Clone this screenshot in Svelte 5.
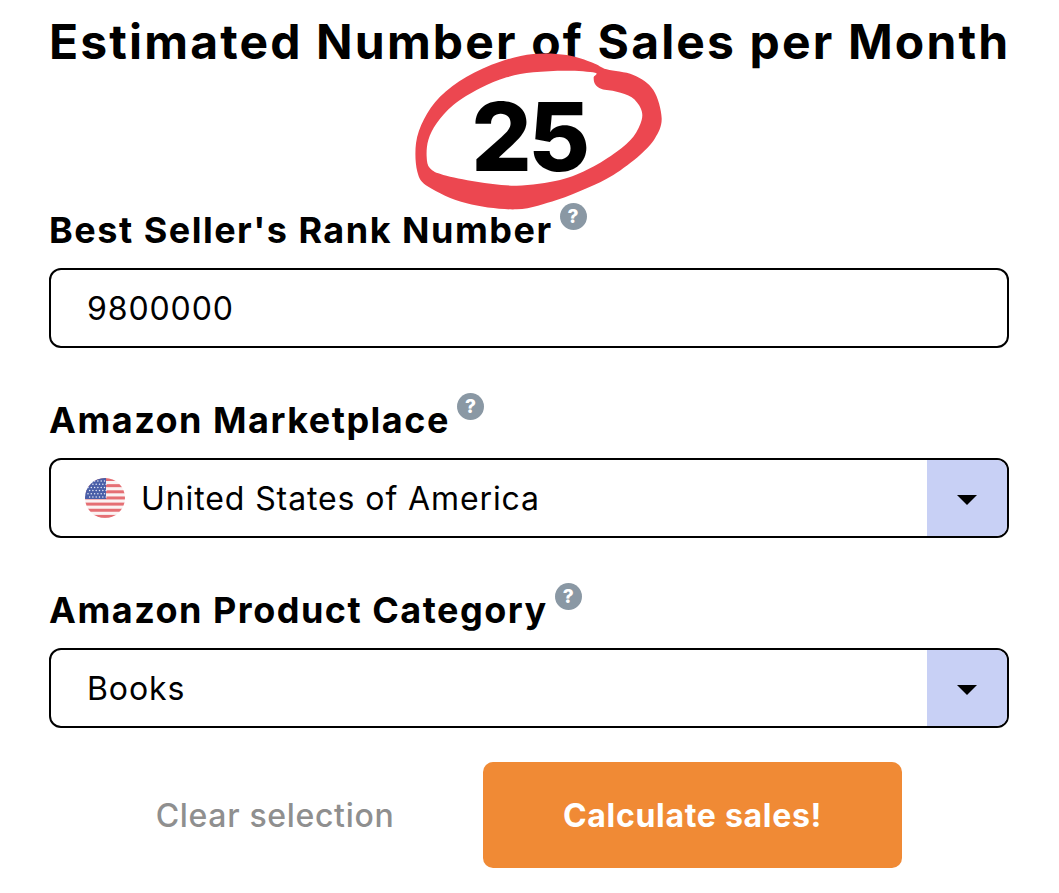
<script>
  const outer = [[620,88],[700,105],[760,150],[785,235],[765,295],[720,345],[640,405],[560,445],[470,480],[350,508],[200,490],[85,440],[52,395],[48,310],[72,238],[120,170],[200,110],[300,65],[400,42],[500,45],[578,68]];
  const inner = [[585,98],[500,92],[400,97],[320,112],[240,145],[160,195],[110,250],[85,300],[80,350],[90,385],[130,405],[230,425],[350,437],[480,420],[570,385],[650,335],[700,290],[725,240],[722,205],[695,172],[650,155],[605,147],[585,132],[581,112]];
  function smooth(p) {
    const n = p.length;
    let d = `M${p[0][0]} ${p[0][1]}`;
    for (let i = 0; i < n; i++) {
      const a = p[(i - 1 + n) % n], b = p[i], c = p[(i + 1) % n], e = p[(i + 2) % n];
      const c1 = [b[0] + (c[0] - a[0]) / 6, b[1] + (c[1] - a[1]) / 6];
      const c2 = [c[0] - (e[0] - b[0]) / 6, c[1] - (e[1] - b[1]) / 6];
      d += `C${c1[0]} ${c1[1]} ${c2[0]} ${c2[1]} ${c[0]} ${c[1]}`;
    }
    return d + 'Z';
  }
  const ring = smooth(outer) + smooth(inner);
  const stripes = [0, 1, 2, 3, 4, 5, 6].map((i) => i * 6.15);
  const stars = [];
  for (let r = 0; r < 6; r++) for (let c = 0; c < 6; c++) stars.push([3 + c * 3.3 + (r % 2) * 1.6, 3 + r * 3.2]);
</script>

<main class="page">
  <h1>Estimated Number of Sales per Month</h1>
  <div class="result">25</div>
  <svg class="ring" viewBox="0 0 840 570" aria-hidden="true"><path d={ring} fill="#ec4750" fill-rule="evenodd" /></svg>

  <div class="label first"><span>Best Seller's Rank Number</span><i class="help">?</i></div>
  <div class="field"><span>9800000</span></div>

  <div class="label"><span>Amazon Marketplace</span><i class="help">?</i></div>
  <div class="field select">
    <svg class="flag" viewBox="0 0 40 40" aria-hidden="true">
      <defs><clipPath id="fc"><circle cx="20" cy="20" r="20" /></clipPath></defs>
      <g clip-path="url(#fc)">
        <rect width="40" height="40" fill="#fbf3f3" />
        {#each stripes as y}<rect x="0" y={y} width="40" height="3" fill="#e56f74" />{/each}
        <rect width="21" height="21" fill="#4a5fa8" />
        {#each stars as s}<circle cx={s[0]} cy={s[1]} r="0.75" fill="#e8ebf6" />{/each}
      </g>
    </svg>
    <span>United States of America</span>
    <b class="arrow"><em></em></b>
  </div>

  <div class="label"><span>Amazon Product Category</span><i class="help">?</i></div>
  <div class="field select"><span>Books</span><b class="arrow"><em></em></b></div>

  <div class="actions">
    <div class="clear">Clear selection</div>
    <div class="go">Calculate sales!</div>
  </div>
</main>

<style>
  :global(body) { margin: 0; background: #fff; }
  .page {
    position: relative;
    width: 960px;
    height: 893px;
    margin-left: 49px;
    font-family: "Inter", "Liberation Sans", sans-serif;
    color: #000;
    box-sizing: border-box;
    overflow: hidden;
  }
  h1 {
    margin: 0;
    padding-top: 13px;
    font-size: 48px;
    line-height: 58px;
    font-weight: 700;
    text-align: center;
    white-space: nowrap;
    letter-spacing: 2.15px;
  }
  .result {
    text-align: center;
    font-size: 95px;
    line-height: 116px;
    font-weight: 800;
    letter-spacing: -3.5px;
    margin-top: 8px;
    height: 110px;
  }
  .ring {
    position: absolute;
    left: 351px;
    top: 40px;
    width: 280px;
    height: 190px;
  }
  .label {
    display: flex;
    align-items: flex-start;
    gap: 7px;
    height: 44px;
    margin-top: 50px;
    margin-bottom: 16px;
    font-size: 36px;
    line-height: 44px;
    font-weight: 700;
    white-space: nowrap;
    letter-spacing: 1.5px;
  }
  .label.first { margin-top: 19px; }
  .help {
    flex: none;
    width: 27px;
    height: 27px;
    margin-top: -5px;
    border-radius: 50%;
    background: #8a98a4;
    color: #fff;
    font-size: 19px;
    line-height: 27px;
    font-style: normal;
    font-weight: 800;
    text-align: center;
    letter-spacing: 0;
    position: relative;
    z-index: 1;
  }
  .field {
    display: flex;
    align-items: center;
    gap: 16px;
    position: relative;
    height: 80px;
    box-sizing: border-box;
    padding-left: 36px;
    border: 2px solid #000;
    border-radius: 12px;
    font-size: 32px;
    font-weight: 400;
    letter-spacing: 0.9px;
    white-space: nowrap;
  }
  .flag { width: 40px; height: 40px; flex: none; margin-left: -2px; }
  .arrow {
    position: absolute;
    right: 0;
    top: 0;
    bottom: 0;
    width: 80px;
    display: flex;
    align-items: center;
    justify-content: center;
    background: #c8d0f5;
    border-radius: 0 10px 10px 0;
  }
  .arrow em {
    width: 0;
    height: 0;
    margin-top: 4px;
    border-left: 10px solid transparent;
    border-right: 10px solid transparent;
    border-top: 10px solid #000;
  }
  .actions {
    display: flex;
    align-items: center;
    margin-top: 34px;
    font-size: 32px;
  }
  .clear {
    width: 434px;
    padding-left: 18px;
    box-sizing: border-box;
    text-align: center;
    color: #8f8f8f;
    font-weight: 500;
    white-space: nowrap;
    letter-spacing: 0.67px;
  }
  .go {
    width: 419px;
    height: 106px;
    display: flex;
    align-items: center;
    justify-content: center;
    background: #f08a35;
    border-radius: 10px;
    color: #fff;
    font-weight: 700;
    letter-spacing: 0.7px;
  }
</style>
